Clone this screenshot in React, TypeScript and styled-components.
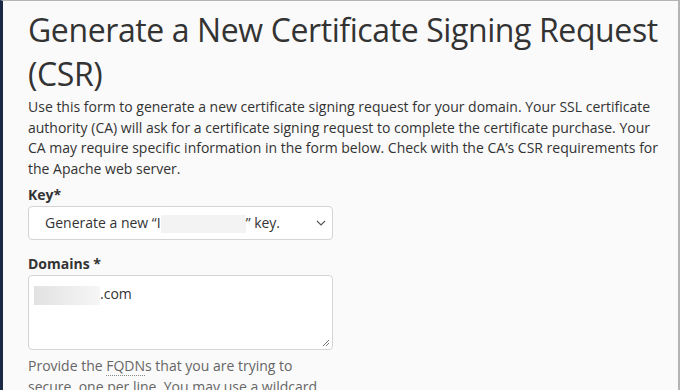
import React from 'react'
import styled, { createGlobalStyle } from 'styled-components'

const GlobalStyle = createGlobalStyle`
  html, body {
    margin: 0;
    padding: 0;
    background: #fafafa;
  }
  body {
    font-family: "Open Sans", "Noto Sans", sans-serif;
    color: #333;
  }
`

// Window edge: dark sidebar strip on the left, grey frame on top and right
const Frame = styled.div`
  box-sizing: border-box;
  height: 390px;
  overflow: hidden;
  background: #fafafa;
  border-left: 3px solid #1b2947;
  border-top: 1px solid #b4b4b4;
  border-right: 2px solid #b4b4b4;
  padding: 7px 10px 0 25px;
`

const Title = styled.h1`
  font-size: 32px;
  font-weight: 400;
  line-height: 44px;
  margin: 0;
  color: #333;
  letter-spacing: -0.4px;
`

const Intro = styled.p`
  font-size: 14px;
  line-height: 20.5px;
  margin: 1px 4px 0 0;
  color: #333;
`

const Field = styled.div`
  display: flex;
  flex-direction: column;
  width: 305px;
`

const Label = styled.label`
  font-size: 14px;
  font-weight: 700;
  line-height: 20px;
  color: #333;
  margin-bottom: 1px;
`

const SelectBox = styled.div`
  box-sizing: border-box;
  height: 34px;
  border: 1px solid #d4d4d4;
  border-radius: 4px;
  background: #fff;
  display: flex;
  align-items: center;
  justify-content: space-between;
  padding: 0 6px 0 16px;
  font-size: 14px;
  color: #333;
`

const Redacted = styled.span<{ w: number; h: number; fade?: boolean }>`
  display: inline-block;
  vertical-align: middle;
  width: ${({ w }) => w}px;
  height: ${({ h }) => h}px;
  background: ${({ fade }) =>
    fade ? 'linear-gradient(90deg, #e2e2e2, #f6f6f6)' : '#f3f3f3'};
`

const TextArea = styled.div`
  position: relative;
  box-sizing: border-box;
  height: 75px;
  border: 1px solid #d4d4d4;
  border-radius: 4px;
  background: #fff;
  padding: 8px 5px;
  font-size: 14px;
  line-height: 20px;
  color: #333;
`

const Grip = styled.svg`
  position: absolute;
  right: 2px;
  bottom: 2px;
`

const Help = styled.p`
  font-size: 14px;
  line-height: 20.5px;
  margin: 6px 0 0;
  color: #666;
`

const Abbr = styled.abbr`
  text-decoration: none;
  border-bottom: 1px dotted #888;
`

const Form = styled.div`
  display: flex;
  flex-direction: column;
  margin-top: 6px;
  gap: 14px;
`

export default function App() {
  return (
    <>
      <GlobalStyle />
      <Frame>
        <Title>Generate a New Certificate Signing Request (CSR)</Title>
        <Intro>
          Use this form to generate a new certificate signing request for your domain. Your SSL
          certificate authority (CA) will ask for a certificate signing request to complete the
          certificate purchase. Your CA may require specific information in the form below. Check
          with the CA’s CSR requirements for the Apache web server.
        </Intro>
        <Form>
          <Field>
            <Label>Key*</Label>
            <SelectBox>
              <span>
                Generate a new “I<Redacted w={85} h={18} />” key.
              </span>
              <svg width="10" height="6" viewBox="0 0 10 6">
                <path d="M1 1l4 4 4-4" fill="none" stroke="#555" strokeWidth="1.1" />
              </svg>
            </SelectBox>
          </Field>
          <Field>
            <Label>Domains *</Label>
            <TextArea>
              <Redacted w={66} h={19} fade />
              .com
              <Grip width="9" height="9" viewBox="0 0 9 9">
                <path d="M8 2L2 8M8 5L5 8" stroke="#777" strokeWidth="1" />
              </Grip>
            </TextArea>
            <Help>
              Provide the <Abbr>FQDN</Abbr>s that you are trying to secure, one per line. You may
              use a wildcard domain by adding an asterisk in a domain name form.
            </Help>
          </Field>
        </Form>
      </Frame>
    </>
  )
}
